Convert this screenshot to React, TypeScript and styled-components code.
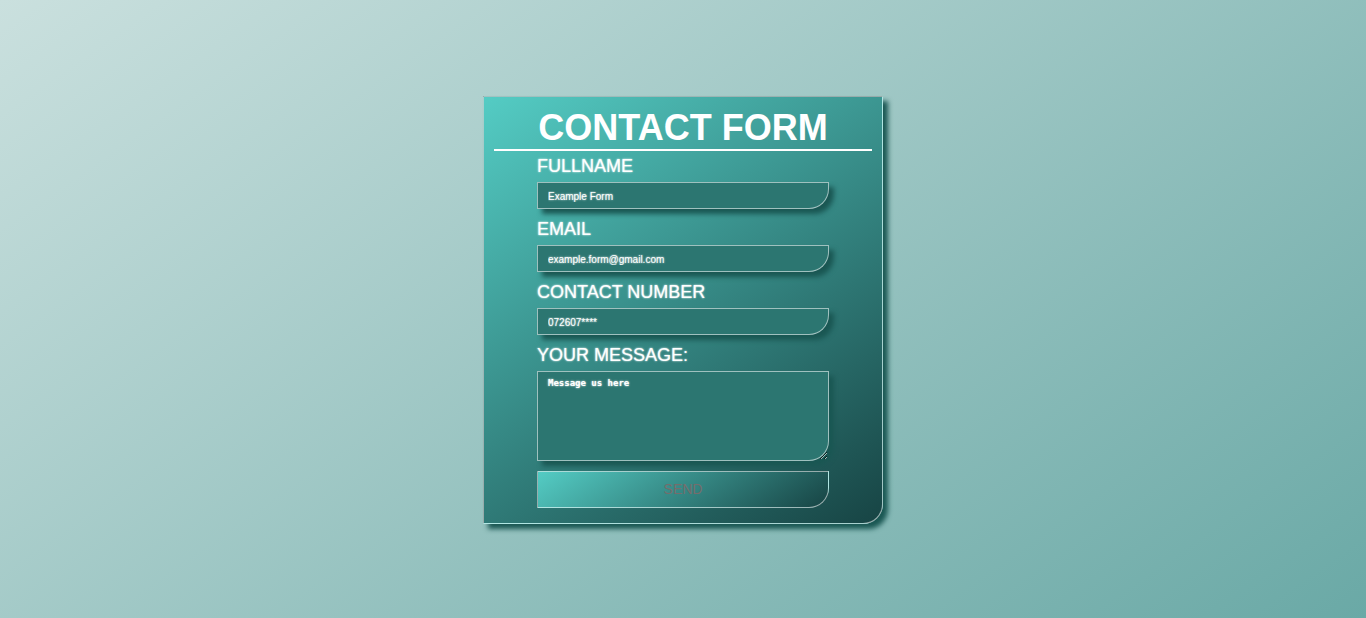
import React from "react";
import styled, { createGlobalStyle, css } from "styled-components";

const GlobalStyle = createGlobalStyle`
  * {
    box-sizing: border-box;
  }

  body {
    margin: 0;
    font-family: "Liberation Sans", Arial, sans-serif;
  }
`;

const gradient = css`
  background-image: linear-gradient(145deg, #54ccc4, #174444);
`;

const Page = styled.main`
  display: flex;
  align-items: center;
  justify-content: center;
  min-height: 100vh;
  padding: 18px 16px 16px;
  background: linear-gradient(145deg, #cae0de, #6aa9a6);
`;

const Card = styled.section`
  width: 100%;
  max-width: 400px;
  padding: 10px 10px 15px;
  border: 1px solid rgba(255, 255, 255, 0.55);
  border-bottom-right-radius: 20px;
  box-shadow: 5px 5px 5px #1a5753;
  ${gradient}
`;

const Title = styled.h1`
  margin: 0;
  border-bottom: 2px solid #fff;
  color: #fff;
  font-size: 36px;
  line-height: 42px;
  text-align: center;
`;

const Form = styled.form`
  display: flex;
  flex-direction: column;
  gap: 10px;
  width: 292px;
  max-width: 100%;
  margin: 5px auto 0;
`;

const Field = styled.div`
  display: flex;
  flex-direction: column;
  gap: 6px;
`;

const Label = styled.label`
  color: #fff;
  font-size: 18px;
  line-height: 20px;
  text-shadow: 0 0 2px #fff;
`;

const control = css`
  display: block;
  width: 100%;
  border: 1px solid rgba(255, 255, 255, 0.55);
  border-radius: 0 0 20px 0;
  outline: none;
`;

const placeholder = css`
  &::placeholder {
    color: #fff;
    opacity: 1;
    text-shadow: 0 0 2px #fff;
  }
`;

const Input = styled.input`
  ${control}
  height: 27px;
  padding: 2px 10px 0;
  background-color: #2c7671;
  box-shadow: 5px 5px 5px #1a5753;
  color: #fff;
  font-family: inherit;
  font-size: 10px;
  ${placeholder}
`;

const TextArea = styled.textarea`
  ${control}
  height: 90px;
  padding: 6px 10px;
  background-color: #2c7671;
  box-shadow: 5px 5px 5px #1a5753;
  color: #fff;
  font-family: "DejaVu Sans Mono", monospace;
  font-size: 9px;
  font-weight: bold;
  ${placeholder}
`;

const Button = styled.button`
  ${control}
  height: 37px;
  padding: 0 6px 2px;
  color: #756d6c;
  font-family: inherit;
  font-size: 14px;
  cursor: pointer;
  ${gradient}
`;

const fields = [
  { id: "fullname", label: "FULLNAME", type: "text", placeholder: "Example Form" },
  { id: "email", label: "EMAIL", type: "email", placeholder: "example.form@gmail.com" },
  { id: "contact", label: "CONTACT NUMBER", type: "tel", placeholder: "072607****" },
];

const App = () => {
  return (
    <>
      <GlobalStyle />
      <Page>
        <Card>
          <Title>CONTACT FORM</Title>
          <Form>
            {fields.map(({ id, label, ...props }) => (
              <Field key={id}>
                <Label htmlFor={id}>{label}</Label>
                <Input id={id} name={id} {...props} />
              </Field>
            ))}
            <Field>
              <Label htmlFor="message">YOUR MESSAGE:</Label>
              <TextArea id="message" name="message" placeholder="Message us here" />
            </Field>
            <Button type="submit">SEND</Button>
          </Form>
        </Card>
      </Page>
    </>
  );
};

export default App;
